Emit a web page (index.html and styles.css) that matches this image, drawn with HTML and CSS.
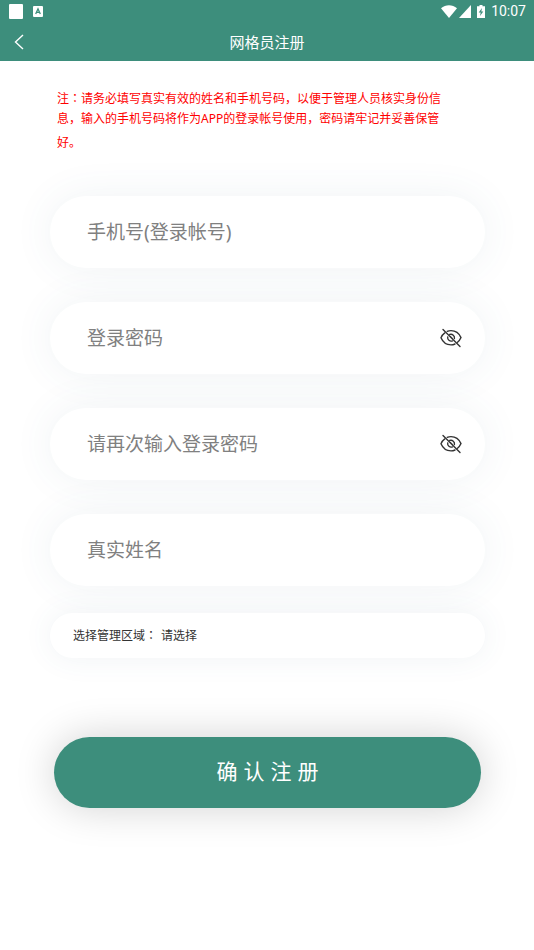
FILE: index.html
```html
<!DOCTYPE html>
<html lang="zh-CN">
<head>
<meta charset="utf-8">
<meta name="viewport" content="width=device-width, initial-scale=1">
<title>网格员注册</title>
<link rel="stylesheet" href="styles.css">
</head>
<body>
<svg class="defs" aria-hidden="true">
  <symbol id="eye-off" viewBox="0 0 22 20">
    <g fill="none" stroke="#333" stroke-width="1.4" stroke-linecap="round">
      <path d="M7.2 3.3C8.4 2.8 9.7 2.6 11 2.6c4.400 0 8.100 2.600 10 7.000-.8 1.900-2 3.500-3.500 4.700M15 16c-1.300.6-2.600.9-4 .9-4.400 0-8.100-2.600-10-7.100.8-2 2.100-3.700 3.800-4.900"/>
      <path d="M9.700 6.500c2.700-.8 5.300 1.300 4.700 4M12.500 12.900c-2.600.9-5.300-1.200-4.800-3.900"/>
      <path d="M10.500 8.800l2 2M3 1.500l17 17"/>
    </g>
  </symbol>
</svg>
<header class="header">
  <div class="status">
    <div class="status-group">
      <svg width="14" height="15" viewBox="0 0 14 15"><rect width="14" height="15" rx="1" fill="#fff"/></svg>
      <svg width="10" height="11" viewBox="0 0 10 11"><rect width="10" height="11" rx="1" fill="#fff"/><path d="M2.700 8L5 2.800 7.300 8M3.500 6.300h3" fill="none" stroke="#3d8e7c" stroke-width="1.300"/></svg>
    </div>
    <div class="status-group status-right">
      <svg width="16" height="13" viewBox="0 0 16 13"><path d="M0 3.200C4.600-.7 11.400-.7 16 3.200L8 13z" fill="#fff"/></svg>
      <svg width="12" height="13" viewBox="0 0 12 13"><path d="M12 0v13H0z" fill="#fff"/></svg>
      <svg class="battery" width="8" height="13" viewBox="0 0 8 13"><path d="M2.500 0h3v1.300H8V13H0V1.300h2.500z" fill="#fff"/><path d="M5 3L1.700 7.500h2L3 11l3.300-4.500h-2z" fill="#3d8e7c"/></svg>
      <time class="clock">10:07</time>
    </div>
  </div>
  <div class="titlebar">
    <button class="back" type="button" aria-label="返回"><svg width="10" height="16" viewBox="0 0 10 16"><path d="M9 1L1.500 8 9 15" fill="none" stroke="#fff" stroke-width="1.400"/></svg></button>
    <h1 class="title">网格员注册</h1>
  </div>
</header>
<main class="content">
  <p class="notice">
    <span class="line">注<span class="colon" lang="zh-TW">：</span>请务必填写真实有效的姓名和手机号码，以便于管理人员核实身份信</span>
    <span class="line">息，输入的手机号码将作为APP的登录帐号使用，密码请牢记并妥善保管</span>
    <span class="line line-last">好。</span>
  </p>
  <form class="form">
    <div class="field"><input class="input" type="tel" placeholder="手机号(登录帐号)" aria-label="手机号(登录帐号)"></div>
    <div class="field"><input class="input" type="password" placeholder="登录密码" aria-label="登录密码"><button class="eye" type="button" aria-label="显示密码"><svg width="22" height="20"><use href="#eye-off"/></svg></button></div>
    <div class="field"><input class="input" type="password" placeholder="请再次输入登录密码" aria-label="请再次输入登录密码"><button class="eye" type="button" aria-label="显示密码"><svg width="22" height="20"><use href="#eye-off"/></svg></button></div>
    <div class="field"><input class="input" type="text" placeholder="真实姓名" aria-label="真实姓名"></div>
    <div class="area">
      <label for="area">选择管理区域<span class="colon" lang="zh-TW">：</span></label>
      <select class="select" id="area"><option>请选择</option></select>
    </div>
    <button class="submit" type="submit">确认注册</button>
  </form>
</main>
</body>
</html>
```
FILE: styles.css
```css
* {
  box-sizing: border-box;
}

body {
  margin: 0;
  background: #fff;
  color: #333;
  font-family: "Noto Sans", "Noto Sans CJK SC", sans-serif;
}

button,
input,
select {
  margin: 0;
  padding: 0;
  border: 0;
  background: none;
  color: inherit;
  font-family: inherit;
}

svg {
  display: block;
}

.defs {
  display: none;
}

.header {
  background: #3d8e7c;
  color: #fff;
}

.status {
  display: flex;
  justify-content: space-between;
  align-items: center;
  height: 22px;
  padding: 0 8px 0 9px;
}

.status-group {
  display: flex;
  align-items: center;
  gap: 10px;
}

.status-right {
  gap: 2px;
}

.battery {
  margin: 0 4px;
}

.clock {
  font: 14px/22px Roboto, sans-serif;
}

.titlebar {
  display: grid;
  grid-template-columns: 40px 1fr 40px;
  align-items: center;
  height: 39px;
}

.back {
  display: flex;
  padding: 8px 14px;
}

.title {
  margin: 0;
  text-align: center;
  font-size: 15px;
  font-weight: 400;
  line-height: 22px;
}

.content {
  padding: 27px 49px 60px 50px;
}

.notice {
  margin: 0 0 39px;
  padding-left: 7px;
  color: #f00;
  font-size: 12px;
  line-height: 20px;
}

.line {
  display: block;
  white-space: nowrap;
}

.line-last {
  line-height: 28px;
}

.colon {
  font-family: "Noto Sans CJK TC", sans-serif;
}

.form {
  display: flex;
  flex-direction: column;
}

.field {
  display: flex;
  align-items: center;
  height: 72px;
  margin-bottom: 34px;
  padding: 0 23px 0 37px;
  border-radius: 36px;
  background: #fff;
  box-shadow: 0 0 40px rgba(60, 100, 130, 0.08);
}

.field:nth-child(4) {
  margin-bottom: 27px;
}

.input {
  flex: 1;
  min-width: 0;
  height: 40px;
  outline: 0;
  font-size: 19px;
}

.input::placeholder {
  color: #808080;
  opacity: 1;
}

.area {
  display: flex;
  align-items: center;
  height: 45px;
  margin-bottom: 79px;
  padding: 0 23px;
  border-radius: 23px;
  background: #fff;
  box-shadow: 0 0 30px rgba(60, 100, 130, 0.08);
  font-size: 12px;
  line-height: 20px;
}

.select {
  flex: 1;
  padding-left: 4px;
  appearance: none;
  font-size: 12px;
}

.submit {
  height: 71px;
  margin: 0 4px;
  padding: 0 0 6px 6px;
  border-radius: 36px;
  background: #3d8e7c;
  box-shadow: 0 0 40px rgba(0, 0, 0, 0.18);
  color: #fff;
  font-size: 21px;
  letter-spacing: 6px;
}
```
